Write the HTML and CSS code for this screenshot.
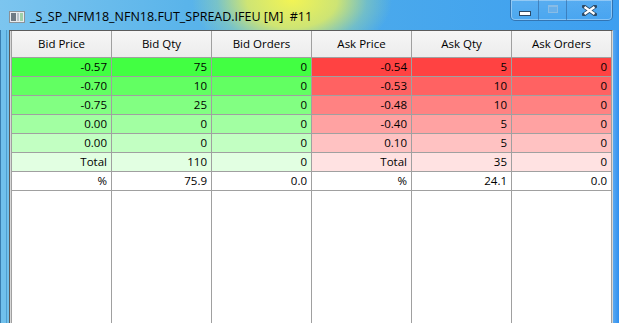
FILE: index.html
```html
<!DOCTYPE html>
<html>
<head>
<meta charset="utf-8">
<title>_S_SP_NFM18_NFN18.FUT_SPREAD.IFEU [M] #11</title>
<link rel="stylesheet" href="styles.css">
</head>
<body>
<div class="window">
  <div class="titlebar">
    <svg class="appicon" width="16" height="12" viewBox="0 0 16 12">
      <rect x="0.5" y="0.5" width="15" height="11" fill="#e8ecef" stroke="#8a9299"/>
      <rect x="2" y="2" width="5" height="8" fill="#6f7a84"/>
      <rect x="8" y="2" width="2" height="8" fill="#b9c2c9"/>
      <rect x="11" y="2" width="3" height="8" fill="#9fd0a8"/>
    </svg>
    <span class="title">_S_SP_NFM18_NFN18.FUT_SPREAD.IFEU [M]  #11</span>
    <div class="caption">
      <div class="cbtn min"><span class="glyph-min"></span></div>
      <div class="cbtn max"><span class="glyph-max"></span></div>
      <div class="cbtn close">
        <svg width="15" height="11" viewBox="0 0 15 11">
          <path d="M2 1.5 L13 9.5 M13 1.5 L2 9.5" stroke="#2d4a66" stroke-width="4" stroke-linecap="square"/>
          <path d="M2.5 2 L12.5 9 M12.5 2 L2.5 9" stroke="#ffffff" stroke-width="2.2"/>
        </svg>
      </div>
    </div>
  </div>
  <div class="frame">
    <div class="side left"></div>
    <div class="client">
      <div class="grid">
        <div class="hd">Bid Price</div>
        <div class="hd">Bid Qty</div>
        <div class="hd">Bid Orders</div>
        <div class="hd">Ask Price</div>
        <div class="hd">Ask Qty</div>
        <div class="hd">Ask Orders</div>

        <div class="c g1">-0.57</div><div class="c g1">75</div><div class="c g1">0</div>
        <div class="c r1">-0.54</div><div class="c r1">5</div><div class="c r1">0</div>

        <div class="c g2">-0.70</div><div class="c g2">10</div><div class="c g2">0</div>
        <div class="c r2">-0.53</div><div class="c r2">10</div><div class="c r2">0</div>

        <div class="c g3">-0.75</div><div class="c g3">25</div><div class="c g3">0</div>
        <div class="c r3">-0.48</div><div class="c r3">10</div><div class="c r3">0</div>

        <div class="c g4">0.00</div><div class="c g4">0</div><div class="c g4">0</div>
        <div class="c r4">-0.40</div><div class="c r4">5</div><div class="c r4">0</div>

        <div class="c g5">0.00</div><div class="c g5">0</div><div class="c g5">0</div>
        <div class="c r5">0.10</div><div class="c r5">5</div><div class="c r5">0</div>

        <div class="c g6">Total</div><div class="c g6">110</div><div class="c g6">0</div>
        <div class="c r6">Total</div><div class="c r6">35</div><div class="c r6">0</div>

        <div class="c">%</div><div class="c">75.9</div><div class="c">0.0</div>
        <div class="c">%</div><div class="c">24.1</div><div class="c">0.0</div>

        <div class="c"></div><div class="c"></div><div class="c"></div>
        <div class="c"></div><div class="c"></div><div class="c"></div>
      </div>
    </div>
    <div class="side right"></div>
  </div>
</div>
</body>
</html>
```

FILE: styles.css
```css
html, body {
    margin: 0;
    padding: 0;
    overflow: hidden;
}
body {
    width: 619px;
    height: 323px;
    font-family: "Open Sans", "Liberation Sans", sans-serif;
    font-size: 11.5px;
    color: #000;
}
.window {
    display: flex;
    flex-direction: column;
    width: 619px;
    height: 323px;
    background:
        radial-gradient(ellipse 100px 62px at 292px 0px, rgba(242,244,85,1), rgba(228,238,95,0.85) 45%, rgba(170,220,150,0.4) 75%, rgba(130,205,190,0) 100%),
        linear-gradient(90deg, #7cc5ef 0%, #5ab4ea 30%, #4aa9ec 60%, #3d9ff0 100%);
}
.titlebar {
    position: relative;
    height: 30px;
    display: flex;
    align-items: center;
    padding-left: 9px;
    flex-shrink: 0;
}
.appicon {
    margin-top: 3px;
}
.title {
    margin-left: 5px;
    margin-top: 3px;
    font-size: 12.5px;
    white-space: pre;
    color: #000;
}
.caption {
    position: absolute;
    top: 0;
    left: 510px;
    display: flex;
    height: 20px;
    border: 1px solid rgba(40,80,130,0.55);
    border-top: none;
    border-radius: 0 0 5px 5px;
    box-shadow: inset 0 0 0 1px rgba(255,255,255,0.35);
    overflow: hidden;
}
.cbtn {
    display: flex;
    align-items: center;
    justify-content: center;
    height: 20px;
    background: linear-gradient(rgba(255,255,255,0.12), rgba(255,255,255,0.05));
}
.cbtn.min {
    width: 27px;
    border-right: 1px solid rgba(40,80,130,0.45);
}
.cbtn.max {
    width: 27px;
    border-right: 1px solid rgba(40,80,130,0.45);
}
.cbtn.close {
    width: 45px;
}
.glyph-min {
    width: 10px;
    height: 3px;
    margin-top: 6px;
    background: #fff;
    border: 1px solid #2d4a66;
}
.glyph-max {
    width: 8px;
    height: 5px;
    margin-top: -2px;
    border: 1px solid rgba(140,190,230,0.9);
    border-top-width: 2px;
    background: rgba(120,180,230,0.6);
}
.frame {
    flex: 1;
    display: flex;
    min-height: 0;
}
.side.left {
    width: 9px;
    border-left: 1px solid #3a7eb0;
    box-sizing: border-box;
    background: linear-gradient(90deg, #70c0ec 0, #70c0ec 5px, #4f9fd0 5px, #4f9fd0 6px, #70c0ec 6px);
}
.side.right {
    width: 6px;
    background: linear-gradient(90deg, #5aa9f0, #2f8ff0);
}
.client {
    display: flex;
    flex-direction: column;
    border-left: 1px solid #5b5b5b;
    border-top: 1px solid #5b5b5b;
    border-right: 1px solid #d8d8d8;
    padding-left: 1px;
    background: #d8d8d8;
}
.grid {
    flex: 1;
    display: grid;
    grid-template-columns: repeat(6, 99px);
    grid-template-rows: 26px repeat(7, 18px) 1fr;
    gap: 1px;
    padding: 0 1px;
    background: #a0a0a0;
}
.hd {
    background: linear-gradient(#f6f6f6, #ececec);
    text-align: center;
    line-height: 26px;
}
.c {
    background: #fff;
    text-align: right;
    line-height: 18px;
    padding-right: 4px;
}
.g1 { background: #42ff42; }
.g2 { background: #62ff62; }
.g3 { background: #82ff82; }
.g4 { background: #a2ffa2; }
.g5 { background: #c2ffc2; }
.g6 { background: #e2ffe2; }
.r1 { background: #ff4242; }
.r2 { background: #ff6262; }
.r3 { background: #ff8282; }
.r4 { background: #ffa2a2; }
.r5 { background: #ffc2c2; }
.r6 { background: #ffe2e2; }
```
